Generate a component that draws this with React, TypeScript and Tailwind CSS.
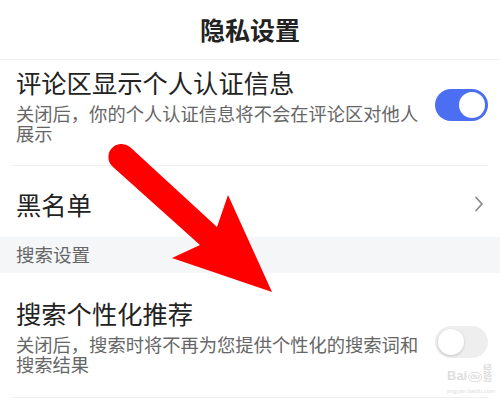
import React from 'react';

const Toggle = ({ on, top }: { on: boolean; top: string }) => (
  <div
    className={`${top} shrink-0 w-[53px] h-[32px] rounded-full p-[3px] flex ${
      on ? 'bg-[#4c6ef0] justify-end' : 'bg-[#eeeeee] justify-start'
    }`}
  >
    <div
      className={`w-[26px] h-[26px] rounded-full bg-white ${
        on ? '' : 'shadow-[0_1px_3px_rgba(0,0,0,0.18)]'
      }`}
    />
  </div>
);

const SwitchRow = ({
  title,
  desc,
  on,
  pad,
  toggleTop,
}: {
  title: string;
  desc: string;
  on: boolean;
  pad: string;
  toggleTop: string;
}) => (
  <div className={`flex justify-between pl-4 pr-3 ${pad}`}>
    <div className="w-[412px]">
      <div className="text-[25.3px] leading-[30px] text-[#222]">{title}</div>
      <div className="mt-[6px] text-[18.3px] leading-[20px] text-[#666]">{desc}</div>
    </div>
    <Toggle on={on} top={toggleTop} />
  </div>
);

export default function App() {
  return (
    <div
      className="relative w-[500px] h-[406px] overflow-hidden bg-white"
      style={{ fontFamily: '"Noto Sans CJK SC", "Noto Sans", sans-serif' }}
    >
      <div className="h-[60px] flex items-center justify-center border-b border-[#f0f0f0]">
        <span className="text-[25px] font-semibold text-[#222]">隐私设置</span>
      </div>

      <SwitchRow
        title="评论区显示个人认证信息"
        desc="关闭后，你的个人认证信息将不会在评论区对他人展示"
        on
        pad="pt-[7px] pb-[22px]"
        toggleTop="mt-[22px]"
      />
      <div className="mx-3 border-b border-[#f0f0f0]" />

      <div className="h-[71px] flex items-center justify-between pl-4 pr-4 pt-[4px]">
        <span className="text-[25.3px] leading-[30px] text-[#222]">黑名单</span>
        <svg width="10" height="16" viewBox="0 0 10 16" fill="none">
          <path d="M2 1.5 L8 8 L2 14.5" stroke="#8a8a8a" strokeWidth="1.8" strokeLinecap="round" strokeLinejoin="round" />
        </svg>
      </div>

      <div className="h-[36px] bg-[#f5f6f8] flex items-center pl-4">
        <span className="text-[18.5px] text-[#666]">搜索设置</span>
      </div>

      <SwitchRow
        title="搜索个性化推荐"
        desc="关闭后，搜索时将不再为您提供个性化的搜索词和搜索结果"
        on={false}
        pad="pt-[25px] pb-[23px]"
        toggleTop="mt-[28px]"
      />
      <div className="mx-3 border-b border-[#f0f0f0]" />

      {/* watermark */}
      <div className="absolute left-[447px] top-[364px] flex flex-col items-start text-[#dedede] leading-none">
        <div className="flex items-end gap-[1px]">
          <span className="text-[13px] font-bold" style={{ fontFamily: '"Liberation Sans", sans-serif' }}>Bai</span>
          <span className="text-[8px] font-bold border border-[#dedede] rounded-full px-[1px]" style={{ fontFamily: '"Liberation Sans", sans-serif' }}>du</span>
          <span className="text-[9px] font-bold">经验</span>
        </div>
        <span className="mt-[6px] text-[6px]" style={{ fontFamily: '"Liberation Sans", sans-serif' }}>jingyan.baidu.com</span>
      </div>

      {/* red arrow */}
      <svg className="absolute left-0 top-0 pointer-events-none" width="500" height="406" viewBox="0 0 500 406">
        <path
          d="M130 147 L217 227 L228 195 L272 292 L172 258 L200 245 L113 167 A13.1 13.1 0 0 1 130 147 Z"
          fill="#ff0000"
        />
      </svg>
    </div>
  );
}
